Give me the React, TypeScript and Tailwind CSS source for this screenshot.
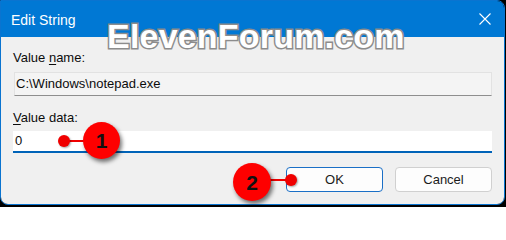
import React from "react";

// ─── Callout marker ───────────────────────────────────────────────────────────

interface CalloutProps {
  n: string;
  circle: string;
  dot: string;
  line: string;
}

function Callout({ n, circle, dot, line }: CalloutProps) {
  return (
    <>
      <div className={`absolute h-[2px] bg-[#f00000] ${line}`} />
      <div className={`absolute w-[12px] h-[12px] rounded-full bg-[#f00000] shadow-[1px_1px_2px_rgba(0,0,0,0.35)] ${dot}`} />
      <div
        className={`absolute rounded-full bg-[#fe0000] shadow-[2px_3px_4px_rgba(0,0,0,0.55)] flex items-center justify-center text-[21px] font-bold text-[#111] leading-none ${circle}`}
      >
        {n}
      </div>
    </>
  );
}

// ─── Field pieces ─────────────────────────────────────────────────────────────

function DialogButton({ label, primary = false }: { label: string; primary?: boolean }) {
  return (
    <div
      className={`w-[97px] h-[25px] rounded-[4px] flex items-center justify-center text-[13px] text-[#1b1b1b] bg-[#fdfdfd] border ${primary ? "border-[#1a6fc6]" : "border-[#d0d0d0]"}`}
    >
      {label}
    </div>
  );
}

// ─── App ──────────────────────────────────────────────────────────────────────

export default function App() {
  return (
    <div
      className="relative w-[506px] h-[207px] bg-black overflow-hidden"
      style={{ fontFamily: '"Liberation Sans", Arial, sans-serif' }}
    >
      <div className="w-[505px] h-[205px] border border-[#0a74d0] rounded-tr-[8px] rounded-b-[8px] overflow-hidden flex flex-col">
        {/* Title bar */}
        <div className="h-[36px] shrink-0 bg-[#0078d4] flex items-center justify-between pl-[10px] pr-[13px] pt-[2px]">
          <span className="text-[14px] text-white leading-none">Edit String</span>
          <svg width="12" height="12" viewBox="0 0 12 12" className="mt-[-2px]">
            <path d="M0.5 0.5 L11.5 11.5 M11.5 0.5 L0.5 11.5" stroke="white" strokeWidth="1.1" />
          </svg>
        </div>

        {/* Body */}
        <div className="flex-1 bg-[#f0f0f0] px-[12px] pt-[13px] flex flex-col text-[13px] text-[#0c0c0c] leading-[16px]">
          <span>
            Value <span className="underline underline-offset-2">n</span>ame:
          </span>
          <div className="mt-[6px] ml-[1px] h-[24px] bg-[#f4f4f4] border border-[#e2e2e2] border-b-[#8e8e8e] flex items-center pl-[1px]">
            C:\Windows\notepad.exe
          </div>

          <span className="mt-[14px]">
            <span className="underline underline-offset-2">V</span>alue data:
          </span>
          <div className="mt-[5px] h-[22px] bg-white border-b-2 border-[#0063b8] flex items-center pl-[2px]">
            0
          </div>

          <div className="mt-[14px] flex justify-end gap-[12px]">
            <DialogButton label="OK" primary />
            <DialogButton label="Cancel" />
          </div>
        </div>
      </div>

      {/* Watermark */}
      <span className="absolute left-[107px] top-[19px] text-[34px] font-bold leading-none text-white tracking-[0.2px] [-webkit-text-stroke:3px_#8c8c8c] [paint-order:stroke_fill]">
        ElevenForum.com
      </span>

      {/* Callouts */}
      <Callout
        n="1"
        line="left-[64px] top-[140px] w-[28px]"
        dot="left-[58px] top-[135px]"
        circle="left-[83px] top-[122px] w-[37px] h-[37px]"
      />
      <Callout
        n="2"
        line="left-[262px] top-[179px] w-[29px]"
        dot="left-[285px] top-[174px]"
        circle="left-[233px] top-[163px] w-[38px] h-[38px]"
      />
    </div>
  );
}
